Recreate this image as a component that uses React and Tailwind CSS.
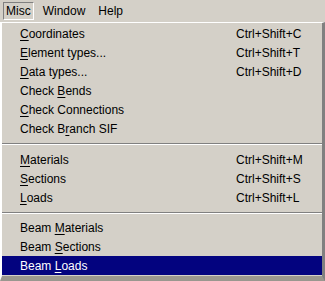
import React from 'react';

const groups = [
  [
    { pre: '', key: 'C', post: 'oordinates', sc: 'Ctrl+Shift+C' },
    { pre: '', key: 'E', post: 'lement types...', sc: 'Ctrl+Shift+T' },
    { pre: '', key: 'D', post: 'ata types...', sc: 'Ctrl+Shift+D' },
    { pre: 'Check ', key: 'B', post: 'ends' },
    { pre: '', key: 'C', post: 'heck Connections' },
    { pre: 'Check B', key: 'r', post: 'anch SIF' },
  ],
  [
    { pre: '', key: 'M', post: 'aterials', sc: 'Ctrl+Shift+M' },
    { pre: '', key: 'S', post: 'ections', sc: 'Ctrl+Shift+S' },
    { pre: '', key: 'L', post: 'oads', sc: 'Ctrl+Shift+L' },
  ],
  [
    { pre: 'Beam ', key: 'M', post: 'aterials' },
    { pre: 'Beam ', key: 'S', post: 'ections' },
    { pre: 'Beam ', key: 'L', post: 'oads', active: true },
  ],
];

const MenuRow = ({ item }) => (
  <div
    className={`grid grid-cols-[216px_1fr] items-center h-[19px] pl-[18px] ${
      item.active ? 'bg-[#03037f] text-white' : 'text-black'
    }`}
  >
    <span className="whitespace-pre">
      {item.pre}
      <span className="underline underline-offset-[2px]">{item.key}</span>
      {item.post}
    </span>
    <span>{item.sc}</span>
  </div>
);

const Separator = ({ h }) => (
  <div className={`flex flex-col justify-center ${h}`}>
    <div className="h-px bg-[#808080]" />
    <div className="h-px bg-white" />
  </div>
);

export default function App() {
  return (
    <div className="w-[325px] h-[281px] overflow-hidden bg-[#d4d0c8] font-['Liberation_Sans',Arial,sans-serif] text-[12px] leading-none">
      {/* Menu bar */}
      <div className="flex items-center h-[22px] pl-[3px]">
        <div className="h-[18px] px-[2px] flex items-center border border-t-[#808080] border-l-[#808080] border-b-white border-r-white">
          Misc
        </div>
        <div className="pl-[9px] pr-[13px]">Window</div>
        <div>Help</div>
      </div>

      {/* Dropdown */}
      <div className="h-[259px] border-t border-l-2 border-l-white border-t-white border-r-[3px] border-r-[#808080] border-b-[5px] border-b-[#9a978f] pt-px">
        {groups[0].map((it, i) => (
          <MenuRow key={i} item={it} />
        ))}
        <Separator h="h-[12px]" />
        {groups[1].map((it, i) => (
          <MenuRow key={i} item={it} />
        ))}
        <Separator h="h-[11px]" />
        {groups[2].map((it, i) => (
          <MenuRow key={i} item={it} />
        ))}
      </div>
    </div>
  );
}
